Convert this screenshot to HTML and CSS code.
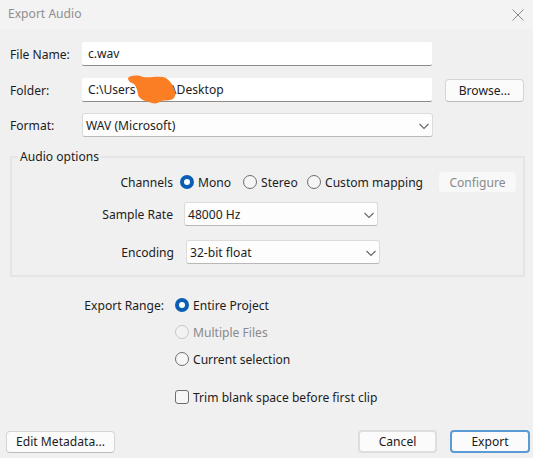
FILE: index.html
```html
<!DOCTYPE html>
<html lang="en">
<head>
<meta charset="utf-8">
<title>Export Audio</title>
<link rel="stylesheet" href="styles.css">
</head>
<body>
<div class="dialog">
  <header class="titlebar">
    <span class="title">Export Audio</span>
    <svg class="close" width="12" height="12" viewBox="0 0 12 12"><path d="M0.5 0.5L11.5 11.5M11.5 0.5L0.5 11.5" stroke="#8b8b8b" stroke-width="1" fill="none"/></svg>
  </header>
  <main class="content">
    <div class="row row-file">
      <label class="label">File Name:</label>
      <div class="input">c.wav</div>
    </div>
    <div class="row row-folder">
      <label class="label">Folder:</label>
      <div class="input">C:\Users\xxxxx\Desktop</div>
      <button class="btn browse">Browse...</button>
    </div>
    <div class="row row-format">
      <label class="label">Format:</label>
      <div class="select format"><span>WAV (Microsoft)</span><svg class="chev" width="10" height="7" viewBox="0 0 10 7"><path d="M0.5 1L5 5.5L9.5 1" stroke="#666" stroke-width="1.1" fill="none"/></svg></div>
    </div>
    <fieldset class="group">
      <legend class="legend">Audio options</legend>
      <div class="opt-row channels">
        <span class="opt-label">Channels</span>
        <span class="radio on"></span><span class="radio-text mono">Mono</span>
        <span class="radio"></span><span class="radio-text stereo">Stereo</span>
        <span class="radio"></span><span class="radio-text custom">Custom mapping</span>
        <button class="btn configure">Configure</button>
      </div>
      <div class="opt-row rate">
        <span class="opt-label">Sample Rate</span>
        <div class="select small"><span>48000 Hz</span><svg class="chev" width="10" height="7" viewBox="0 0 10 7"><path d="M0.5 1L5 5.5L9.5 1" stroke="#666" stroke-width="1.1" fill="none"/></svg></div>
      </div>
      <div class="opt-row encoding">
        <span class="opt-label">Encoding</span>
        <div class="select small"><span>32-bit float</span><svg class="chev" width="10" height="7" viewBox="0 0 10 7"><path d="M0.5 1L5 5.5L9.5 1" stroke="#666" stroke-width="1.1" fill="none"/></svg></div>
      </div>
    </fieldset>
    <section class="range">
      <div class="range-row">
        <span class="range-label">Export Range:</span>
        <span class="radio on"></span><span class="radio-text">Entire Project</span>
      </div>
      <div class="range-row">
        <span class="range-label"></span>
        <span class="radio disabled"></span><span class="radio-text muted">Multiple Files</span>
      </div>
      <div class="range-row">
        <span class="range-label"></span>
        <span class="radio"></span><span class="radio-text">Current selection</span>
      </div>
      <div class="range-row trim">
        <span class="range-label"></span>
        <span class="check"></span><span class="radio-text">Trim blank space before first clip</span>
      </div>
    </section>
  </main>
  <footer class="footer">
    <button class="btn meta">Edit Metadata...</button>
    <div class="footer-right">
      <button class="btn action">Cancel</button>
      <button class="btn action primary">Export</button>
    </div>
  </footer>
  <svg class="scribble" width="48" height="30" viewBox="0 0 48 30"><path d="M0 3C3 0 10 0 15 2C21 3 29 1 35 2C40 3 44 8 46 14C48 18 48 21 45 24C41 26 37 25 33 26C30 29 25 29 21 27C16 26 12 24 10 20C10 16 8 11 6 9C3 8 0 6 0 3Z" fill="#fb7d24"/></svg>
</div>
</body>
</html>
```

FILE: styles.css
```css
* { box-sizing: border-box; }
html, body { margin: 0; padding: 0; }
body {
  width: 533px;
  height: 458px;
  overflow: hidden;
  background: #f0f0f0;
  font-family: "Noto Sans", "Open Sans", sans-serif;
  font-size: 12.1px;
  color: #1c1c1c;
}
.dialog {
  position: relative;
  width: 533px;
  height: 458px;
  display: flex;
  flex-direction: column;
}
.titlebar {
  height: 29px;
  flex: none;
  background: #f3f3f3;
  display: flex;
  align-items: center;
  justify-content: space-between;
  padding: 0 8px 2px 8px;
}
.title { color: #8f8f8f; }
.close { margin-right: 1px; margin-top: 2px; }
.content { flex: 1; padding: 13px 8px 0 10px; }
.row { display: flex; align-items: center; height: 24px; }
.row-folder { margin-top: 12px; }
.row-format { margin-top: 11px; }
.label { width: 72px; flex: none; }
.input {
  width: 350px;
  height: 24px;
  background: #fff;
  border-bottom: 1px solid #8c8c8c;
  border-radius: 2px;
  padding: 0 6px;
  line-height: 23px;
  color: #1c1c1c;
}
.btn {
  font-family: inherit;
  font-size: 12.1px;
  color: #1c1c1c;
  background: #fbfbfb;
  border: 1px solid #d4d4d4;
  border-bottom-color: #bcbcbc;
  border-radius: 4px;
  padding: 0;
  height: 23px;
}
.browse { width: 79px; margin-left: 13px; }
.select {
  display: flex;
  align-items: center;
  justify-content: space-between;
  height: 24px;
  background: #fdfdfd;
  border: 1px solid #dcdcdc;
  border-bottom-color: #b8b8b8;
  border-radius: 3px;
  padding: 0 3px 0 3px;
}
.format { width: 351px; }
.small { width: 194px; }
.chev { flex: none; margin-top: 2px; }
.group {
  margin: 11px 0 0 0;
  padding: 7px 0 0 0;
  width: 515px;
  height: 129px;
  border: 2px solid #e5e5e5;
}
.legend { padding: 0 2px; margin-left: 6px; line-height: 17px; }
.opt-row { display: flex; align-items: center; }
.opt-label { width: 161px; text-align: right; flex: none; }
.channels { height: 20px; }
.rate { margin-top: 10px; }
.rate .opt-label { margin-right: 11px; }
.encoding { margin-top: 14px; }
.encoding .opt-label { width: 162px; margin-right: 12px; }
.channels .opt-label { margin-right: 7px; }
.radio {
  width: 14px;
  height: 14px;
  flex: none;
  border-radius: 50%;
  border: 1px solid #6e6e6e;
  background: #f6f6f6;
}
.radio.on {
  border: 4px solid #0a5fb4;
  background: #fff;
}
.radio.disabled { border-color: #c8c8c8; background: #f2f2f2; }
.radio-text { margin-left: 4px; white-space: nowrap; }
.mono { width: 45px; }
.stereo { width: 46px; }
.custom { width: 100px; }
.muted { color: #8a8a8a; }
.configure {
  width: 77px;
  height: 20px;
  margin-left: 14px;
  color: #8a8a8a;
  background: #f8f8f8;
  border: 0;
}
.range { margin-top: 19px; }
.range-row { display: flex; align-items: center; height: 18px; margin-bottom: 9px; }
.range-label { width: 165px; padding-right: 11px; text-align: right; flex: none; }
.trim { margin-top: 20px; }
.check {
  width: 14px;
  height: 14px;
  flex: none;
  border: 1px solid #6e6e6e;
  border-radius: 3px;
  background: #f6f6f6;
}
.footer {
  flex: none;
  display: flex;
  justify-content: space-between;
  align-items: center;
  padding: 0 3px 5px 6px;
}
.meta { width: 109px; height: 22px; }
.footer-right { display: flex; gap: 13px; }
.action { width: 79px; height: 23px; border-width: 2px; border-color: #dedede; }
.primary { width: 80px; border-color: #5a9bd5; }
.scribble { position: absolute; left: 128px; top: 75px; }
```
